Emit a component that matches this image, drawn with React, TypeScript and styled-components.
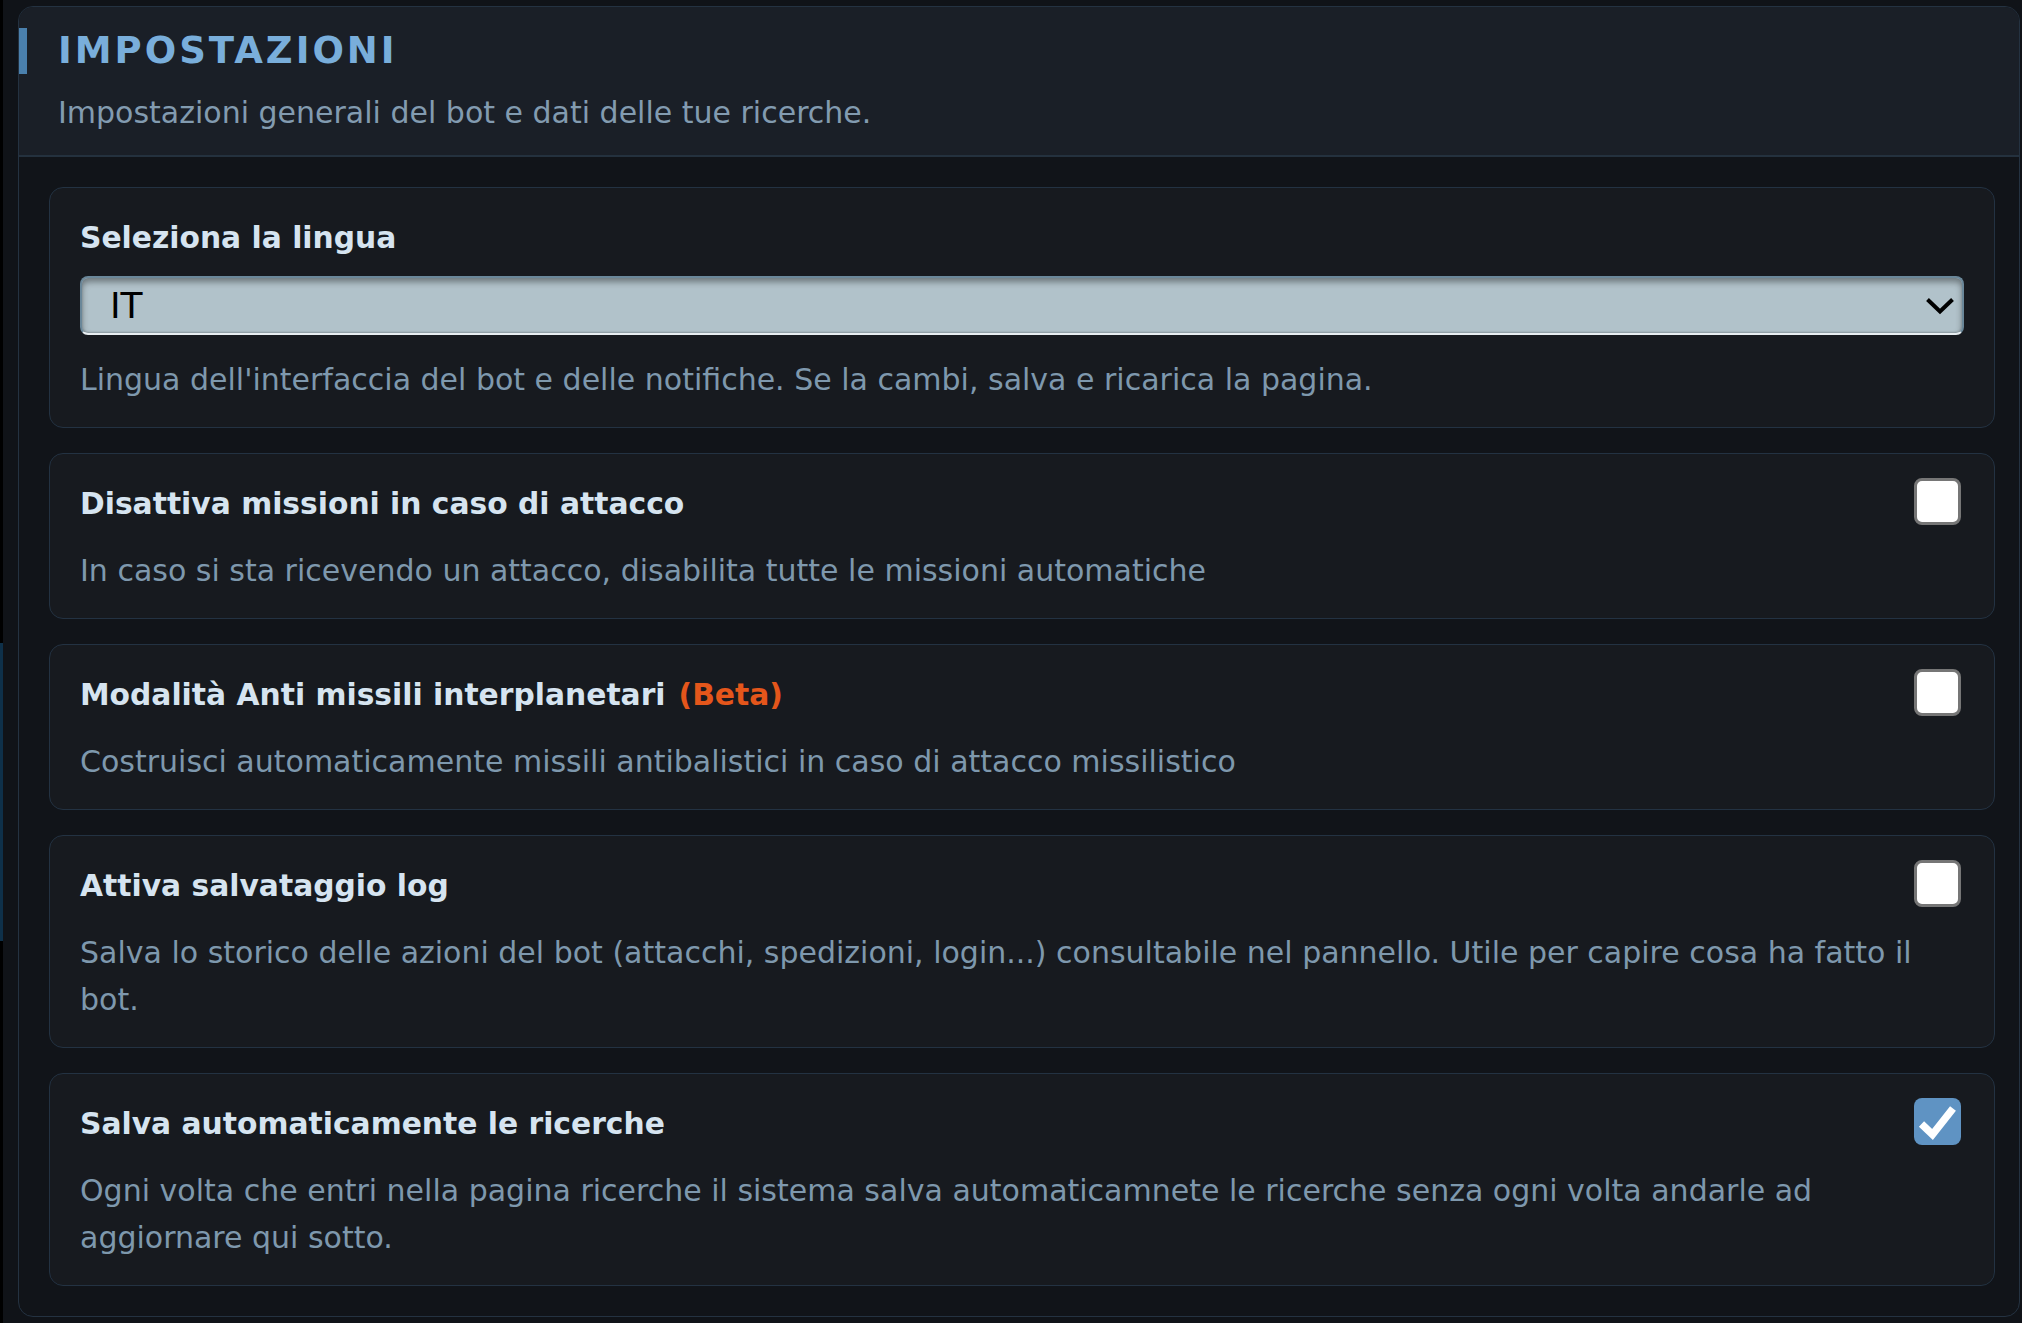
import React, { useState } from "react";
import styled, { createGlobalStyle } from "styled-components";

const GlobalStyle = createGlobalStyle`
  html, body {
    margin: 0;
    padding: 0;
    background: #101318;
    font-family: "DejaVu Sans", Verdana, sans-serif;
    overflow: hidden;
  }
  * { box-sizing: border-box; }
`;

const Page = styled.div`
  display: flex;
  width: 2022px;
  height: 1323px;
  background: #101318;
`;

const Rail = styled.div`
  width: 3px;
  flex: none;
  background: #000;
  padding-top: 643px;
`;

const RailThumb = styled.div`
  height: 298px;
  background: #0e3049;
`;

const Main = styled.main`
  flex: 1;
  padding: 6px 2px 0 15px;
`;

const Panel = styled.section`
  border: 1px solid #243241;
  border-radius: 15px;
  background: #111419;
  overflow: hidden;
`;

const Header = styled.header`
  background: #1a1f27;
  border-bottom: 2px solid #24313e;
  padding: 22px 40px 20px 39px;
`;

const Title = styled.h1`
  position: relative;
  margin: 0 0 17px;
  font-size: 37px;
  line-height: 44px;
  font-weight: 700;
  letter-spacing: 3px;
  color: #79aedb;

  &::before {
    content: "";
    position: absolute;
    left: -39px;
    top: -1px;
    width: 8px;
    height: 46px;
    background: #4a80ad;
  }
`;

const Subtitle = styled.p`
  margin: 0;
  font-size: 30px;
  line-height: 45px;
  color: #829bb0;
`;

const Body = styled.div`
  display: flex;
  flex-direction: column;
  gap: 25px;
  padding: 30px 24px 30px 30px;
`;

const Card = styled.div`
  display: flex;
  flex-direction: column;
  gap: 21px;
  padding: 27px 30px 24px 30px;
  border: 1px solid #233242;
  border-radius: 14px;
  background: #171a1f;
`;

const Row = styled.div`
  display: flex;
  align-items: flex-start;
  justify-content: space-between;
  min-height: 45px;
`;

const Label = styled.div`
  font-size: 29.75px;
  line-height: 45px;
  font-weight: 700;
  color: #d6e4f0;
`;

const Beta = styled.span`
  margin-left: 13px;
  color: #e4561b;
`;

const Desc = styled.p`
  margin: 0;
  font-size: 30px;
  line-height: 47px;
  color: #7e98ad;
`;

const SelectWrap = styled.div`
  position: relative;
  margin-top: -5px;
`;

const Select = styled.select`
  appearance: none;
  -webkit-appearance: none;
  display: block;
  width: 100%;
  height: 59px;
  padding: 0 60px 0 28px;
  font-family: "DejaVu Sans", Verdana, sans-serif;
  font-size: 36px;
  color: #000;
  background: #b1c2ca;
  border: 2px solid #6a8799;
  border-bottom-color: #e8eef1;
  border-radius: 8px;
  box-shadow: inset 0 4px 6px rgba(0, 0, 0, 0.38), inset 0 -1px 2px rgba(0, 0, 0, 0.2);
  outline: none;
`;

const Chevron = styled.svg`
  position: absolute;
  right: 10px;
  top: 50%;
  transform: translateY(-50%);
  pointer-events: none;
`;

const Box = styled.button<{ $checked: boolean }>`
  flex: none;
  width: 47px;
  height: 47px;
  margin: -3px 3px 0 0;
  padding: 0;
  display: flex;
  align-items: center;
  justify-content: center;
  border-radius: 8px;
  cursor: pointer;
  background: ${(p) => (p.$checked ? "#5f93c3" : "#ffffff")};
  border: ${(p) => (p.$checked ? "none" : "3px solid #767676")};
`;

type Setting = {
  label: string;
  beta?: boolean;
  desc: string;
  checked: boolean;
};

const initial: Setting[] = [
  {
    label: "Disattiva missioni in caso di attacco",
    desc: "In caso si sta ricevendo un attacco, disabilita tutte le missioni automatiche",
    checked: false,
  },
  {
    label: "Modalità Anti missili interplanetari",
    beta: true,
    desc: "Costruisci automaticamente missili antibalistici in caso di attacco missilistico",
    checked: false,
  },
  {
    label: "Attiva salvataggio log",
    desc: "Salva lo storico delle azioni del bot (attacchi, spedizioni, login...) consultabile nel pannello. Utile per capire cosa ha fatto il bot.",
    checked: false,
  },
  {
    label: "Salva automaticamente le ricerche",
    desc: "Ogni volta che entri nella pagina ricerche il sistema salva automaticamnete le ricerche senza ogni volta andarle ad aggiornare qui sotto.",
    checked: true,
  },
];

function Check({ checked, onToggle }: { checked: boolean; onToggle: () => void }) {
  return (
    <Box type="button" role="checkbox" aria-checked={checked} $checked={checked} onClick={onToggle}>
      {checked && (
        <svg width="47" height="47" viewBox="0 0 47 47">
          <path d="M7.5 26 L18.5 36.5 L39 10.5" fill="none" stroke="#ffffff" strokeWidth="7.5" strokeLinecap="butt" strokeLinejoin="miter" />
        </svg>
      )}
    </Box>
  );
}

export default function App() {
  const [items, setItems] = useState<Setting[]>(initial);
  const [lang, setLang] = useState("IT");

  const toggle = (i: number) =>
    setItems((prev) => prev.map((it, j) => (j === i ? { ...it, checked: !it.checked } : it)));

  return (
    <Page>
      <GlobalStyle />
      <Rail>
        <RailThumb />
      </Rail>
      <Main>
        <Panel>
          <Header>
            <Title>IMPOSTAZIONI</Title>
            <Subtitle>Impostazioni generali del bot e dati delle tue ricerche.</Subtitle>
          </Header>
          <Body>
            <Card>
              <Row>
                <Label>Seleziona la lingua</Label>
              </Row>
              <SelectWrap>
                <Select value={lang} onChange={(e) => setLang(e.target.value)}>
                  <option value="IT">IT</option>
                  <option value="EN">EN</option>
                  <option value="ES">ES</option>
                  <option value="DE">DE</option>
                  <option value="FR">FR</option>
                </Select>
                <Chevron width="28" height="18" viewBox="0 0 28 18">
                  <path d="M1.5 2.5 L14 14.5 L26.5 2.5" fill="none" stroke="#000" strokeWidth="4" />
                </Chevron>
              </SelectWrap>
              <Desc>Lingua dell'interfaccia del bot e delle notifiche. Se la cambi, salva e ricarica la pagina.</Desc>
            </Card>
            {items.map((it, i) => (
              <Card key={it.label}>
                <Row>
                  <Label>
                    {it.label}
                    {it.beta && <Beta>(Beta)</Beta>}
                  </Label>
                  <Check checked={it.checked} onToggle={() => toggle(i)} />
                </Row>
                <Desc>{it.desc}</Desc>
              </Card>
            ))}
          </Body>
        </Panel>
      </Main>
    </Page>
  );
}
